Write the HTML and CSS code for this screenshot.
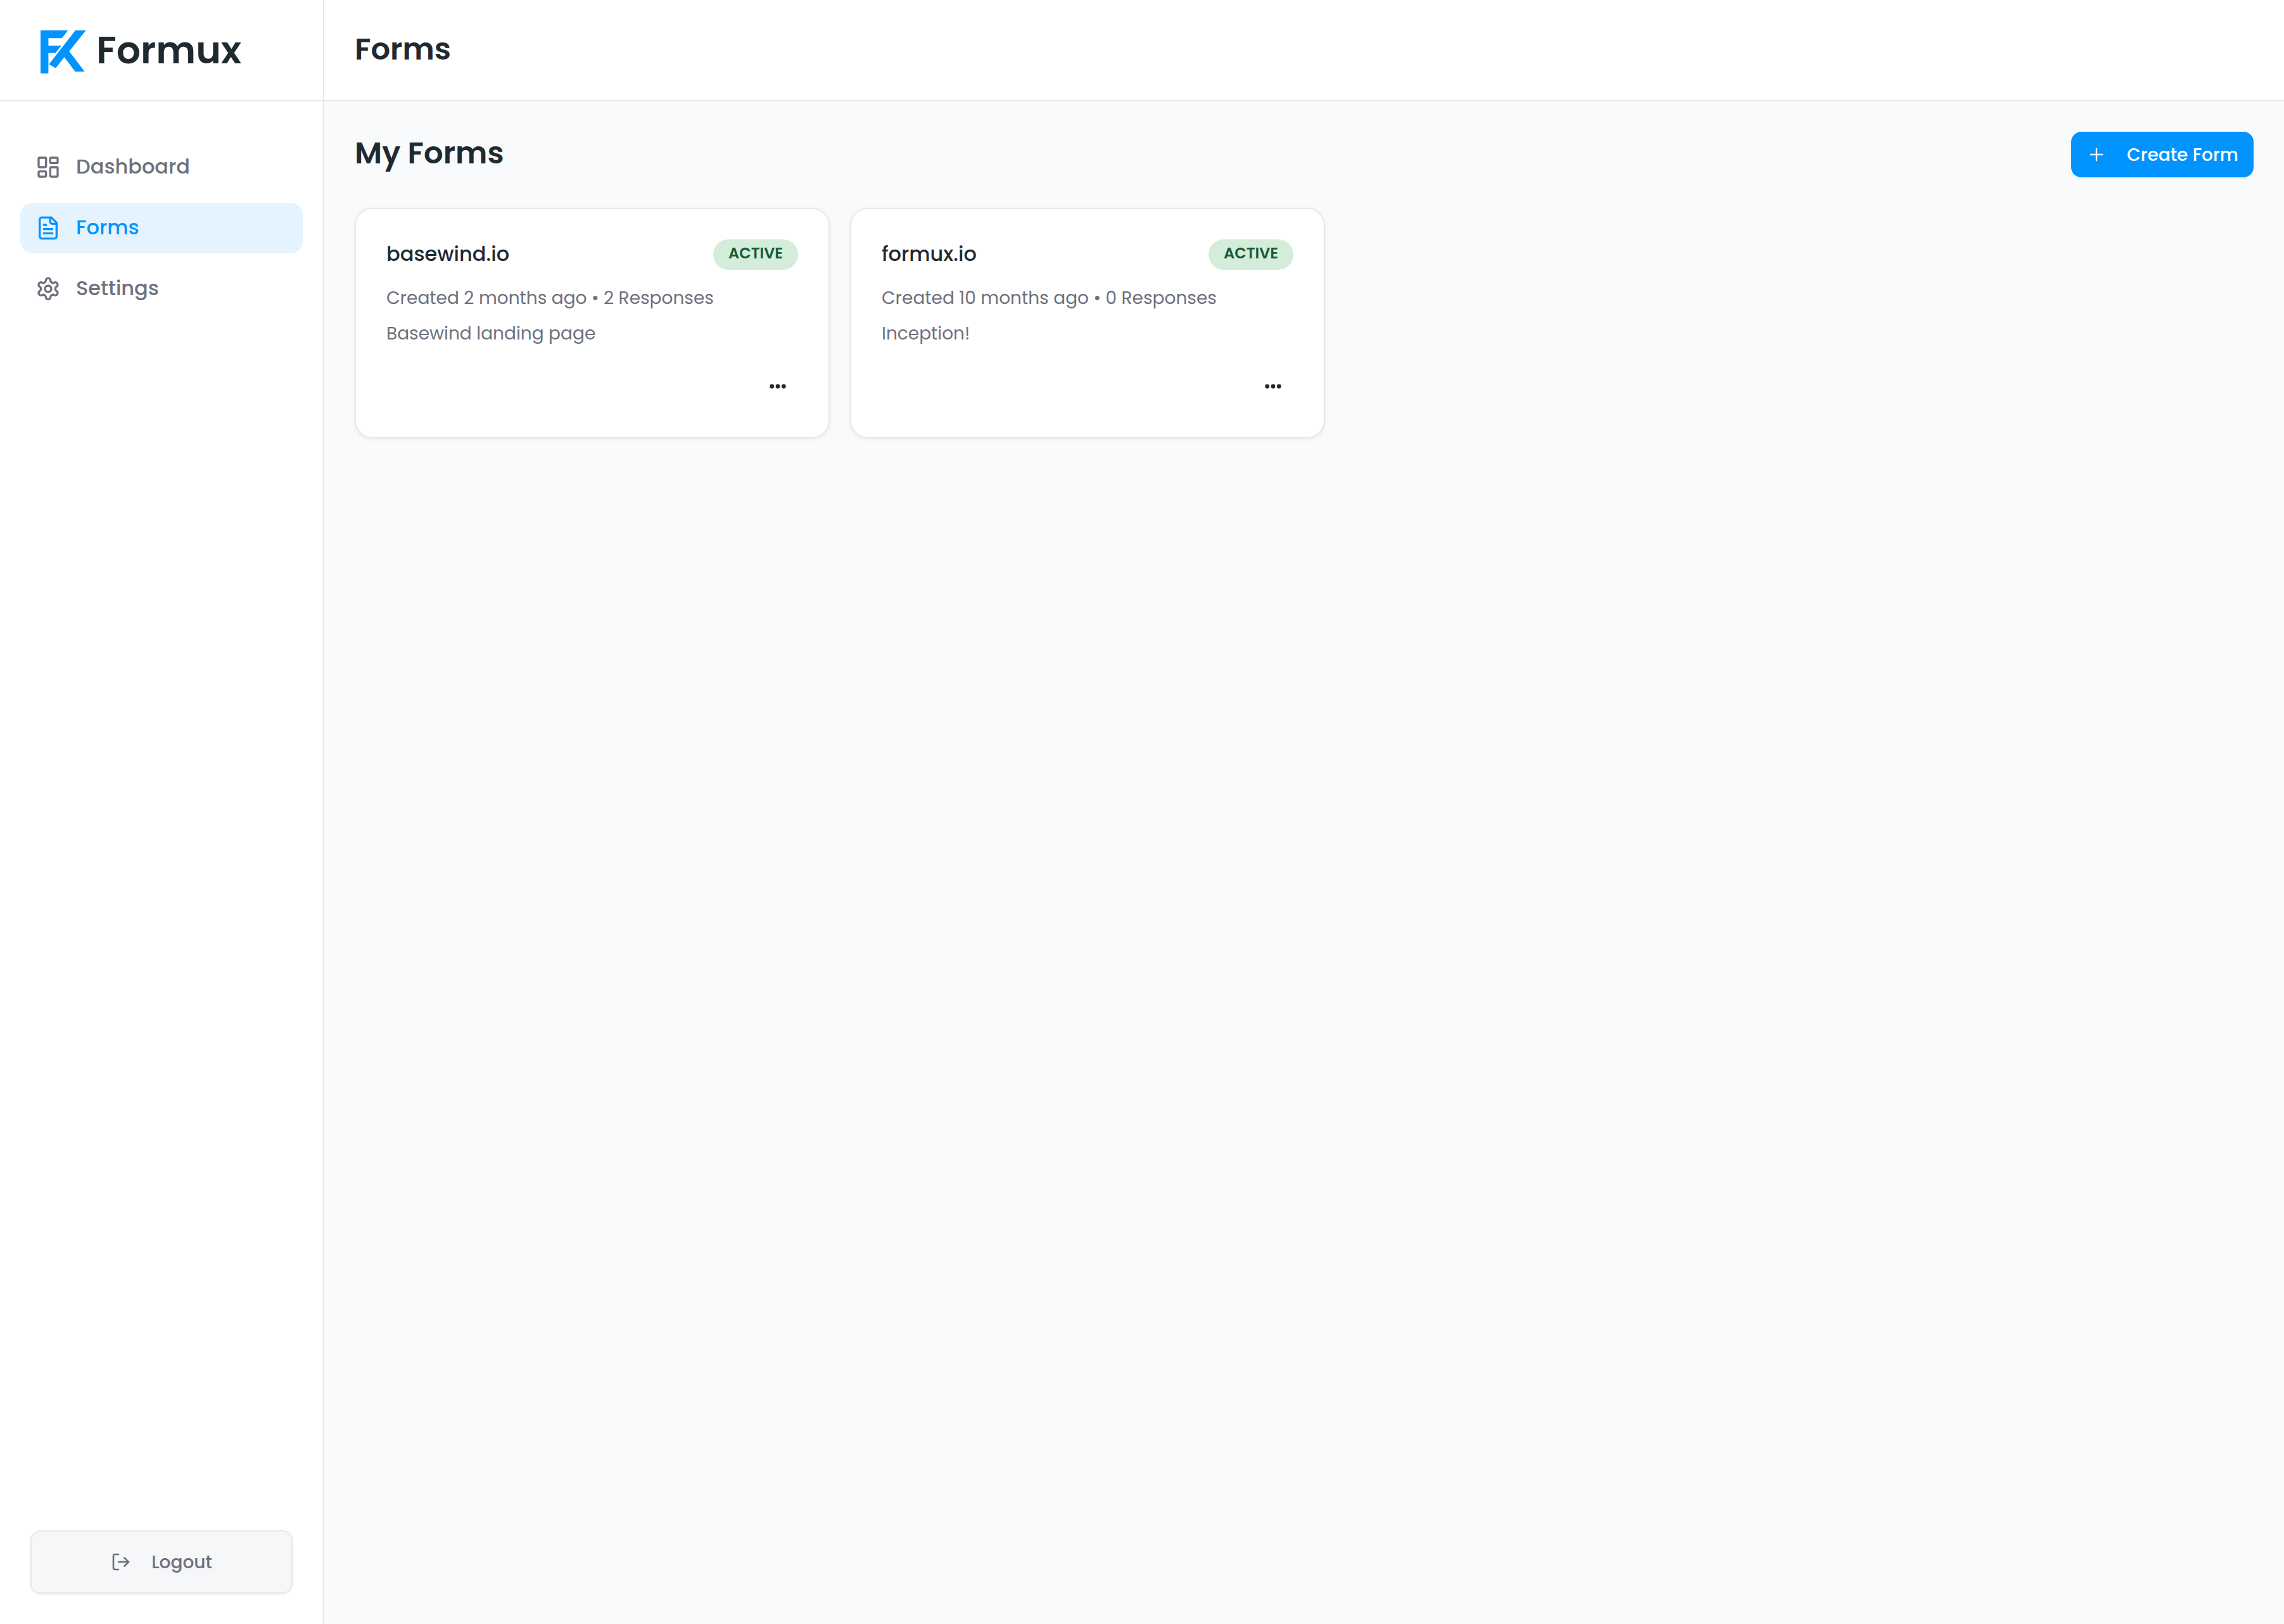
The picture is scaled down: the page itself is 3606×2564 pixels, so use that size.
FILE: index.html
```
<!DOCTYPE html>
<html lang="en">

<head>
    <meta charset="UTF-8">
    <meta name="viewport" content="width=device-width, initial-scale=1.0">
    <title>Forms - Formux</title>
    <link rel="stylesheet" href="styles.css">
</head>

<body>
    <!-- Sidebar -->
    <aside class="sidebar">
        <a class="logo" href="#">
            <svg class="logo-mark" viewBox="0 0 72 68" fill="currentColor">
                <path d="M0 0H43.2L33.8 12.2H12.4V24H33L23.5 35.8H12.4V68H0Z" />
                <path d="M55 0H71.6L45.3 33L69.6 65H54.7L37.5 42.3L24 59.6L13.3 53.4Z" />
            </svg>
            <span>Formux</span>
        </a>

        <nav class="nav">
            <a class="nav-item" href="#">
                <svg class="icon" viewBox="0 0 24 24">
                    <rect x="3" y="3" width="7" height="9" rx="1" />
                    <rect x="14" y="3" width="7" height="5" rx="1" />
                    <rect x="14" y="12" width="7" height="9" rx="1" />
                    <rect x="3" y="16" width="7" height="5" rx="1" />
                </svg>
                <span>Dashboard</span>
            </a>
            <a class="nav-item active" href="#">
                <svg class="icon" viewBox="0 0 24 24">
                    <path d="M15 2H6a2 2 0 0 0-2 2v16a2 2 0 0 0 2 2h12a2 2 0 0 0 2-2V7Z" />
                    <path d="M14 2v4a2 2 0 0 0 2 2h4" />
                    <path d="M10 9H8" />
                    <path d="M16 13H8" />
                    <path d="M16 17H8" />
                </svg>
                <span>Forms</span>
            </a>
            <a class="nav-item" href="#">
                <svg class="icon" viewBox="0 0 24 24">
                    <path d="M12.22 2h-.44a2 2 0 0 0-2 2v.18a2 2 0 0 1-1 1.73l-.43.25a2 2 0 0 1-2 0l-.15-.08a2 2 0 0 0-2.73.73l-.22.38a2 2 0 0 0 .73 2.73l.15.1a2 2 0 0 1 1 1.72v.51a2 2 0 0 1-1 1.74l-.15.09a2 2 0 0 0-.73 2.73l.22.38a2 2 0 0 0 2.73.73l.15-.08a2 2 0 0 1 2 0l.43.25a2 2 0 0 1 1 1.73V20a2 2 0 0 0 2 2h.44a2 2 0 0 0 2-2v-.18a2 2 0 0 1 1-1.73l.43-.25a2 2 0 0 1 2 0l.15.08a2 2 0 0 0 2.73-.73l.22-.39a2 2 0 0 0-.73-2.73l-.15-.08a2 2 0 0 1-1-1.74v-.5a2 2 0 0 1 1-1.74l.15-.09a2 2 0 0 0 .73-2.73l-.22-.38a2 2 0 0 0-2.73-.73l-.15.08a2 2 0 0 1-2 0l-.43-.25a2 2 0 0 1-1-1.73V4a2 2 0 0 0-2-2z" />
                    <circle cx="12" cy="12" r="3" />
                </svg>
                <span>Settings</span>
            </a>
        </nav>

        <button class="logout-button">
            <svg class="icon" viewBox="0 0 24 24">
                <path d="M9 21H5a2 2 0 0 1-2-2V5a2 2 0 0 1 2-2h4" />
                <path d="M16 17l5-5-5-5" />
                <path d="M21 12H9" />
            </svg>
            <span>Logout</span>
        </button>
    </aside>

    <!-- Main -->
    <div class="main">
        <header class="header">
            <h1>Forms</h1>
        </header>

        <main class="content">
            <div class="content-top">
                <h2>My Forms</h2>
                <button class="create-button">
                    <svg class="icon" viewBox="0 0 24 24">
                        <path d="M5 12h14M12 5v14" />
                    </svg>
                    <span>Create Form</span>
                </button>
            </div>

            <div class="cards">
                <div class="card">
                    <div class="card-top">
                        <h3>basewind.io</h3>
                        <span class="badge">ACTIVE</span>
                    </div>
                    <p class="meta">Created 2 months ago • 2 Responses</p>
                    <p class="description">Basewind landing page</p>
                    <button class="menu-button" aria-label="More">
                        <svg viewBox="0 0 32 32">
                            <circle cx="6.7" cy="16" r="3.4" />
                            <circle cx="16" cy="16" r="3.4" />
                            <circle cx="25.3" cy="16" r="3.4" />
                        </svg>
                    </button>
                </div>

                <div class="card">
                    <div class="card-top">
                        <h3>formux.io</h3>
                        <span class="badge">ACTIVE</span>
                    </div>
                    <p class="meta">Created 10 months ago • 0 Responses</p>
                    <p class="description">Inception!</p>
                    <button class="menu-button" aria-label="More">
                        <svg viewBox="0 0 32 32">
                            <circle cx="6.7" cy="16" r="3.4" />
                            <circle cx="16" cy="16" r="3.4" />
                            <circle cx="25.3" cy="16" r="3.4" />
                        </svg>
                    </button>
                </div>
            </div>
        </main>
    </div>
</body>

</html>
```
FILE: styles.css
```
* {
    box-sizing: border-box;
}

body {
    margin: 0;
    display: flex;
    height: 100vh;
    font-family: Poppins, Inter, "Open Sans", sans-serif;
    color: #1f2a30;
    background-color: #f8fafc;
}

h1,
h2,
h3,
p {
    margin: 0;
}

a {
    color: inherit;
    text-decoration: none;
}

button {
    font: inherit;
    border: none;
    padding: 0;
    cursor: pointer;
}

.icon {
    flex: none;
    width: 32px;
    height: 32px;
    fill: none;
    stroke: currentColor;
    stroke-width: 2;
    stroke-linecap: round;
    stroke-linejoin: round;
}

/* Sidebar */
.sidebar {
    flex: none;
    display: flex;
    flex-direction: column;
    width: 512px;
    background-color: #fff;
    border-right: 2px solid #e6e8e9;
}

.logo {
    display: flex;
    align-items: center;
    gap: 16px;
    height: 160px;
    padding-left: 64px;
    border-bottom: 2px solid #e6e8e9;
    font-size: 60px;
    font-weight: 600;
}

.logo-mark {
    width: 72px;
    height: 68px;
    margin-top: 5px;
    color: #0194ff;
}

.nav {
    flex: 1;
    display: flex;
    flex-direction: column;
    gap: 16px;
    padding: 64px 32px;
}

.nav-item {
    display: flex;
    align-items: center;
    gap: 24px;
    height: 80px;
    padding: 0 24px;
    border-radius: 20px;
    color: #6e717d;
    font-size: 32px;
    font-weight: 500;
}

.nav-item span {
    padding-bottom: 2px;
}

.nav-item .icon {
    width: 40px;
    height: 40px;
}

.nav-item.active {
    background-color: #e5f3ff;
    color: #0194ff;
}

.logout-button {
    display: flex;
    align-items: center;
    justify-content: center;
    gap: 32px;
    height: 100px;
    margin: 0 48px 48px;
    background-color: #f6f7f9;
    border: 2px solid #e6e8e9;
    border-radius: 16px;
    box-shadow: 0 2px 4px rgba(0, 0, 0, 0.06);
    color: #6e717d;
    font-size: 28px;
    font-weight: 500;
}

.logout-button span,
.create-button span {
    padding-top: 2px;
}

/* Main */
.main {
    flex: 1;
}

.header {
    display: flex;
    align-items: center;
    height: 160px;
    padding: 0 48px 3px;
    background-color: #fff;
    border-bottom: 2px solid #e6e8e9;
}

h1,
h2 {
    font-size: 48px;
    font-weight: 600;
}

.content {
    padding: 48px;
}

.content-top {
    display: flex;
    align-items: center;
    justify-content: space-between;
    height: 72px;
    margin-bottom: 48px;
}

.content-top h2 {
    padding-bottom: 5px;
}

.create-button {
    display: flex;
    align-items: center;
    gap: 32px;
    width: 288px;
    height: 72px;
    padding: 0 24px;
    background-color: #0194ff;
    border-radius: 16px;
    box-shadow: 0 2px 4px rgba(0, 0, 0, 0.05);
    color: #fff;
    font-size: 28px;
    font-weight: 500;
    white-space: nowrap;
}

.create-button .icon {
    stroke-width: 1.8;
}

.cards {
    display: grid;
    grid-template-columns: repeat(auto-fill, 750px);
    gap: 32px;
}

.card {
    display: flex;
    flex-direction: column;
    height: 364px;
    padding: 48px;
    background-color: #fff;
    border: 2px solid #e6e8e9;
    border-radius: 28px;
    box-shadow: 0 2px 6px rgba(0, 0, 0, 0.06);
}

.card-top {
    display: flex;
    align-items: center;
    justify-content: space-between;
    height: 48px;
    margin-bottom: 24px;
}

.card h3 {
    padding-bottom: 3px;
    font-size: 32px;
    font-weight: 500;
}

.badge {
    width: 134px;
    height: 48px;
    border-radius: 24px;
    background-color: #d4edda;
    color: #155a34;
    font-size: 24px;
    font-weight: 600;
    line-height: 43px;
    text-align: center;
}

.meta,
.description {
    color: #6e717d;
    font-size: 28px;
    line-height: 42px;
}

.description {
    margin-top: 14px;
}

.menu-button {
    display: flex;
    align-items: center;
    justify-content: center;
    width: 64px;
    height: 64px;
    margin-top: auto;
    margin-left: auto;
    background-color: transparent;
}

.menu-button svg {
    width: 32px;
    height: 32px;
    fill: #1f2a30;
}
```
